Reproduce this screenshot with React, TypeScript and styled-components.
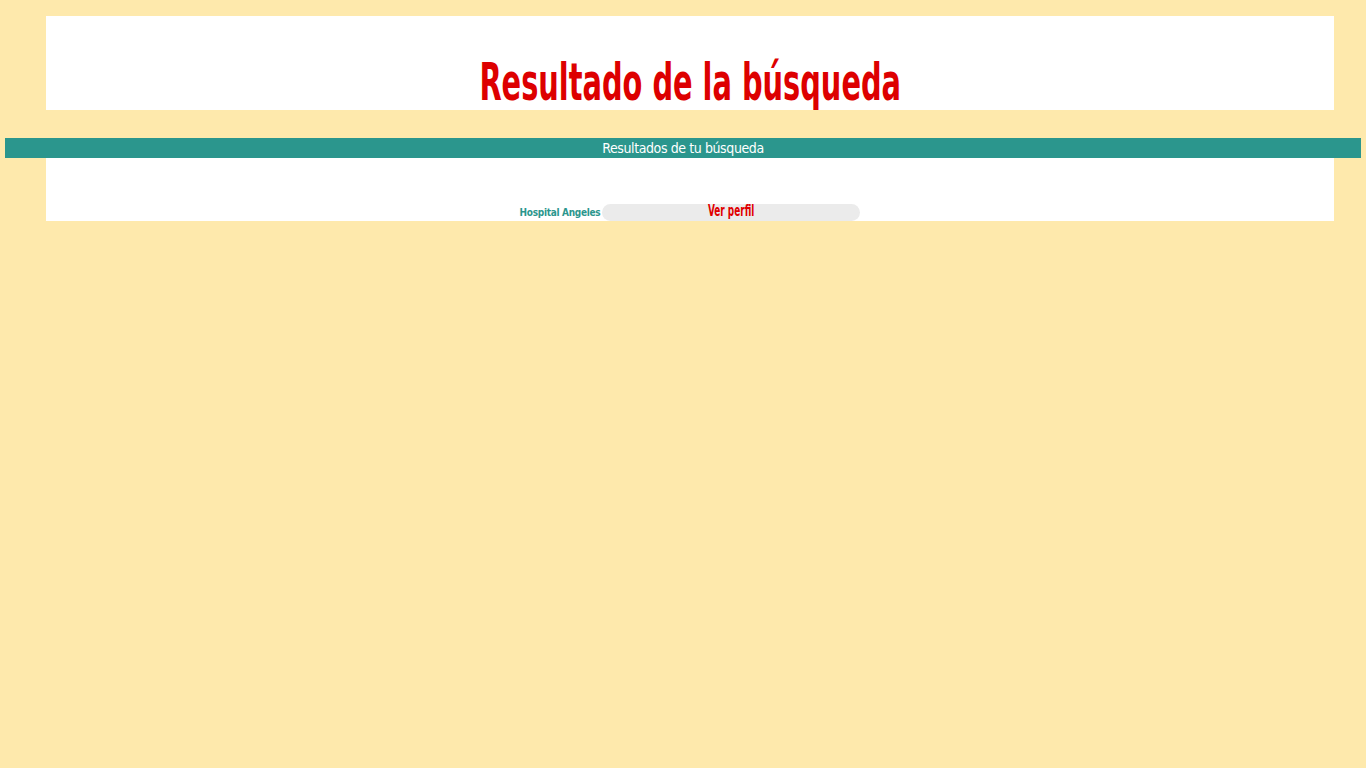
import React from 'react';
import styled, { createGlobalStyle } from 'styled-components';

const GlobalStyle = createGlobalStyle`
    html, body {
        margin: 0;
        padding: 0;
        background-color: #fee9ac;
        min-height: 100%;
    }
    body {
        font-family: "DejaVu Sans Condensed", "Liberation Sans", sans-serif;
    }
`;

const Page = styled.div`
    display: flex;
    flex-direction: column;
    padding: 16px 5px 0;
    min-height: 752px;
`;

const Header = styled.header`
    display: flex;
    justify-content: center;
    align-items: flex-end;
    height: 94px;
    margin: 0 27px 0 41px;
    background-color: #ffffff;
    overflow: hidden;
`;

const Title = styled.h1`
    display: inline-block;
    margin: 0;
    font-family: "DejaVu Sans Condensed", "Liberation Sans", sans-serif;
    font-weight: 700;
    font-size: 52px;
    line-height: 60px;
    white-space: nowrap;
    color: #dd0000;
    transform: translateY(2px) scaleX(0.616);
`;

const Bar = styled.div`
    margin-top: 28px;
    height: 20px;
    display: flex;
    justify-content: center;
    align-items: center;
    background-color: #2b968d;
    color: #ffffff;
    font-size: 14px;
    letter-spacing: -0.4px;
`;

const Results = styled.section`
    display: flex;
    flex-direction: column;
    justify-content: flex-end;
    height: 63px;
    margin: 0 27px 0 41px;
    background-color: #ffffff;
`;

const Row = styled.div`
    display: flex;
    justify-content: center;
    align-items: flex-end;
    gap: 2px;
    height: 17px;
`;

const Name = styled.span`
    color: #2b968d;
    font-weight: 700;
    font-size: 10px;
    letter-spacing: -0.3px;
    line-height: 12px;
    padding-bottom: 2px;
`;

const ProfileButton = styled.button`
    width: 258px;
    height: 17px;
    padding: 0 0 2px;
    border: none;
    border-radius: 9px;
    background-color: #ebebeb;
    font-family: "DejaVu Sans Condensed", "Liberation Sans", sans-serif;
    cursor: pointer;
`;

const ButtonLabel = styled.span`
    display: inline-block;
    color: #e00000;
    font-weight: 700;
    font-size: 15px;
    line-height: 15px;
    transform: scaleX(0.66);
`;

const App: React.FC = () => {
    return (
        <>
            <GlobalStyle />
            <Page>
                <Header>
                    <Title>Resultado de la búsqueda</Title>
                </Header>
                <Bar>Resultados de tu búsqueda</Bar>
                <Results>
                    <Row>
                        <Name>Hospital Angeles</Name>
                        <ProfileButton type="button">
                            <ButtonLabel>Ver perfil</ButtonLabel>
                        </ProfileButton>
                    </Row>
                </Results>
            </Page>
        </>
    );
};

export default App;
